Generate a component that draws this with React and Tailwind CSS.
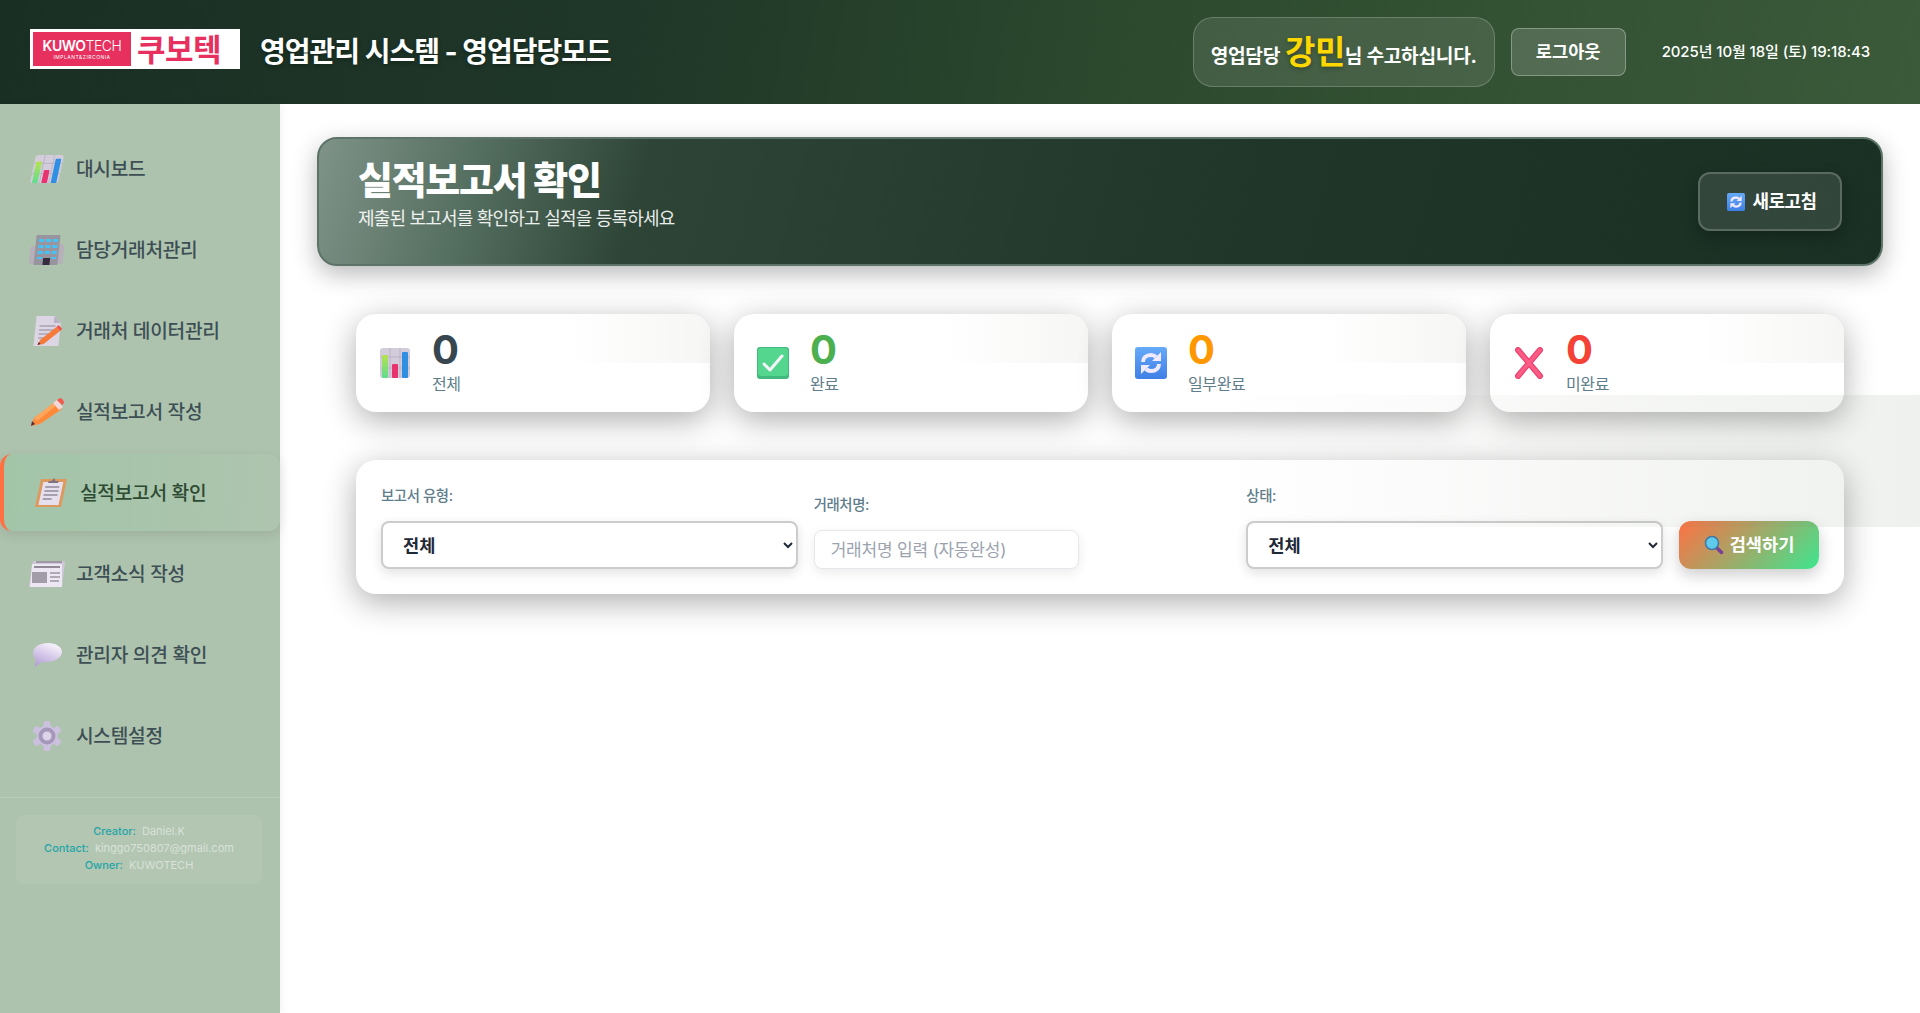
const ChartIcon = ({ className }) => (
  <svg viewBox="0 0 32 32" preserveAspectRatio="none" className={className}>
    <defs>
      <linearGradient id="chartGreen" x1="0" y1="0" x2="0" y2="1">
        <stop offset="0" stopColor="#b5e24f" />
        <stop offset="1" stopColor="#5fdc8f" />
      </linearGradient>
    </defs>
    <rect x="1" y="1" width="30" height="30" rx="3" fill="#d2ccdb" />
    <path d="M1 10h30M1 21h30M11 1v30M21 1v30" stroke="#b5aec1" strokeWidth="0.8" />
    <rect x="3" y="8" width="6" height="23" rx="1" fill="url(#chartGreen)" />
    <rect x="13" y="17" width="6" height="14" rx="1" fill="#e8336f" />
    <rect x="23" y="5" width="6" height="26" rx="1" fill="#2f8fe3" />
  </svg>
)

const BuildingIcon = ({ className }) => (
  <svg viewBox="0 0 34 30" className={className}>
    <path d="M0 12l6-2v19H0zM28 8l6 2v19h-6z" fill="#b5b0ba" />
    <rect x="5" y="0" width="24" height="30" rx="1" fill="#99959f" />
    <path d="M8 4h5v3H8zM15 4h5v3h-5zM22 4h5v3h-5zM8 10h5v3H8zM15 10h5v3h-5zM22 10h5v3h-5zM8 16h5v3H8zM15 16h5v3h-5zM22 16h5v3h-5zM8 22h5v2H8zM22 22h5v2h-5z" fill="#46c3f5" />
    <rect x="14" y="23" width="7" height="7" fill="#362d3f" />
  </svg>
)

const DocPencilIcon = ({ className }) => (
  <svg viewBox="0 0 30 30" className={className}>
    <path d="M3 0h18l7 7v23H3z" fill="#dcd6e4" />
    <path d="M21 0l7 7h-7z" fill="#b9b2c4" />
    <path d="M7 10h16M7 14h16M7 18h10M7 22h7" stroke="#a9a2b2" strokeWidth="1.4" />
    <path d="M7 29l2-5L24 11l4 4-15 13z" fill="#f47b3a" />
    <path d="M24 11l2-2 4 4-2 2z" fill="#f2524a" />
    <path d="M7 29l1-3 2 2z" fill="#5a2a3a" />
  </svg>
)

const PencilIcon = ({ className }) => (
  <svg viewBox="0 0 36 30" className={className}>
    <path d="M2 29l3-8L26 5l7 7-22 15z" fill="#ff8a3a" />
    <path d="M5 21L26 5l2 3L8 24z" fill="#ffa65c" />
    <path d="M24 6l4-3 6 7-4 3z" fill="#f2d8d8" />
    <path d="M28 3l3-2c2 0 4 3 4 5l-2 2z" fill="#f4574c" />
    <path d="M2 29l1-5 3 3z" fill="#5a2a3a" />
  </svg>
)

const ClipboardIcon = ({ className }) => (
  <svg viewBox="0 0 30 30" className={className}>
    <path d="M2 1h26v28H2z" fill="#de9a5e" />
    <rect x="5" y="4" width="20" height="23" fill="#e6e0ee" />
    <path d="M8 9h14M8 13h14M8 17h14M8 21h9" stroke="#918a99" strokeWidth="1.4" />
    <path d="M10 5V3h3l2-3 2 3h3v2z" fill="#7c7480" />
  </svg>
)

const NewsIcon = ({ className }) => (
  <svg viewBox="0 0 36 26" className={className}>
    <path d="M4 0h32l-3 26H0z" fill="#cfc8d8" />
    <path d="M3 3h30v23H1z" fill="#ece7f2" />
    <path d="M7 1h26" stroke="#8f8996" strokeWidth="1.5" />
    <path d="M5 6h26" stroke="#8f8996" strokeWidth="2" />
    <rect x="3" y="11" width="15" height="11" fill="#a29ca8" />
    <path d="M21 12h10M21 16h10M21 20h9" stroke="#9a94a1" strokeWidth="1.4" />
  </svg>
)

const BubbleIcon = ({ className }) => (
  <svg viewBox="0 0 30 24" className={className}>
    <defs>
      <linearGradient id="bubbleFill" x1="0.7" y1="0" x2="0.2" y2="1">
        <stop offset="0" stopColor="#f9f5fc" />
        <stop offset="1" stopColor="#b29dd6" />
      </linearGradient>
    </defs>
    <path d="M16 0c8 0 14 4 14 9s-7 10-15 10c-2 0-4 0-6 .6L3 24l.8-8C1.500 14.500 1 12 1 10 1 4 8 0 16 0z" fill="url(#bubbleFill)" />
  </svg>
)

const GearIcon = ({ className }) => (
  <svg viewBox="0 0 30 30" className={className}>
    <g fill="#cbc0dd">
      <circle cx="15" cy="15" r="10.500" />
      <rect x="11.500" y="0" width="7" height="30" rx="2" />
      <rect x="11.500" y="0" width="7" height="30" rx="2" transform="rotate(60 15 15)" />
      <rect x="11.500" y="0" width="7" height="30" rx="2" transform="rotate(120 15 15)" />
    </g>
    <circle cx="15" cy="15" r="6.500" fill="#dcd4e8" stroke="#a698ba" strokeWidth="4" />
  </svg>
)

const RefreshIcon = ({ className }) => (
  <svg viewBox="0 0 32 32" className={className}>
    <defs>
      <linearGradient id="refreshFill" x1="0" y1="0" x2="0" y2="1">
        <stop offset="0" stopColor="#66aaf8" />
        <stop offset="1" stopColor="#3f7fe6" />
      </linearGradient>
    </defs>
    <rect width="32" height="32" rx="3" fill="url(#refreshFill)" />
    <path d="M8 15c0-4 3-7 8-7 2 0 4 1 5 2" fill="none" stroke="#f1eafc" strokeWidth="4" />
    <path d="M17 14h9V5z" fill="#f1eafc" />
    <path d="M24 17c0 4-3 7-8 7-2 0-4-1-5-2" fill="none" stroke="#f1eafc" strokeWidth="4" />
    <path d="M15 18H6v9z" fill="#f1eafc" />
  </svg>
)

const CheckIcon = ({ className }) => (
  <svg viewBox="0 0 32 32" className={className}>
    <rect width="32" height="32" rx="3" fill="#42b97f" />
    <rect x="1" y="1" width="30" height="28" rx="3" fill="#55d68f" />
    <path d="M7 17l6 6 12-14" fill="none" stroke="#f6f4fb" strokeWidth="3" strokeLinecap="round" strokeLinejoin="round" />
  </svg>
)

const CrossIcon = ({ className }) => (
  <svg viewBox="0 0 32 32" className={className}>
    <path d="M5 3l22 26M27 3L5 29" stroke="#e9436f" strokeWidth="6" strokeLinecap="round" />
    <path d="M5 3l22 26M27 3L5 29" stroke="#fb5c86" strokeWidth="3.5" strokeLinecap="round" />
  </svg>
)

const SearchIcon = ({ className }) => (
  <svg viewBox="0 0 20 20" className={className}>
    <path d="M12.5 12.5l5 5" stroke="#7b3f98" strokeWidth="3.5" strokeLinecap="round" />
    <circle cx="8" cy="8" r="6.5" fill="#5ecbed" stroke="#3f77a8" strokeWidth="1.5" />
  </svg>
)

const navItems = [
  { label: '대시보드', icon: <ChartIcon className="h-[30px] w-[30px] -skew-x-12" /> },
  { label: '담당거래처관리', icon: <BuildingIcon className="h-[30px] w-[34px] -skew-x-6" /> },
  { label: '거래처 데이터관리', icon: <DocPencilIcon className="h-[30px] w-[30px] -skew-x-6" /> },
  { label: '실적보고서 작성', icon: <PencilIcon className="h-[30px] w-[36px]" /> },
  { label: '실적보고서 확인', icon: <ClipboardIcon className="h-[30px] w-[30px] -skew-x-12" />, active: true },
  { label: '고객소식 작성', icon: <NewsIcon className="h-[26px] w-[36px]" /> },
  { label: '관리자 의견 확인', icon: <BubbleIcon className="h-[24px] w-[30px]" /> },
  { label: '시스템설정', icon: <GearIcon className="h-[30px] w-[30px]" /> },
]

const stats = [
  { label: '전체', color: 'text-[#37474f]', icon: <ChartIcon className="h-[32px] w-[32px]" /> },
  { label: '완료', color: 'text-[#4caf50]', icon: <CheckIcon className="h-[32px] w-[32px]" /> },
  { label: '일부완료', color: 'text-[#ff9800]', icon: <RefreshIcon className="h-[32px] w-[32px]" /> },
  { label: '미완료', color: 'text-[#f44336]', icon: <CrossIcon className="h-[32px] w-[34px]" /> },
]

function Header() {
  return (
    <header className="flex h-[104px] items-center bg-[linear-gradient(100deg,#1a2f24_0%,#1f3728_33%,#2d4a2e_60%,#3b5a3a_100%)] pl-[30px] pr-[50px] text-white">
      <div className="mt-[-6px] flex h-[40px] w-[210px] items-center bg-white px-[3px]">
        <div className="flex h-[34px] w-[98px] flex-col items-center justify-center bg-[#e8305f] text-white">
          <span className="text-[14px] leading-[16px] tracking-[-0.5px]">
            <span className="font-semibold">KUWO</span>
            <span className="font-light">TECH</span>
          </span>
          <span className="text-[5px] leading-[7px] tracking-[0.5px]">IMPLANT&ZIRCONIA</span>
        </div>
        <span className="ml-[6px] text-[31px] font-bold leading-none tracking-[-0.5px] text-[#e8305f]">쿠보텍</span>
      </div>
      <h1 className="ml-[20px] text-[28px] font-bold tracking-[-1px] [text-shadow:0_2px_4px_rgba(0,0,0,0.3)]">
        영업관리 시스템 - 영업담당모드
      </h1>
      <div className="ml-auto flex h-[70px] w-[302px] items-center justify-center rounded-[20px] border border-white/20 bg-white/10 text-[19.2px] font-bold tracking-[-0.3px]">
        <span className="mt-[8px]">영업담당</span>
        <span className="ml-[5px] text-[33px] font-bold leading-none tracking-[-0.5px] text-[#ffd700] [text-shadow:0_2px_4px_rgba(0,0,0,0.3)]">강민</span>
        <span className="mt-[8px]">님 수고하십니다.</span>
      </div>
      <button type="button" className="ml-[16px] h-[48px] w-[115px] rounded-lg border border-white/30 bg-white/15 text-[17.6px] font-bold">
        로그아웃
      </button>
      <div className="ml-[36px] text-[15px] font-medium tracking-[-0.1px]">2025년 10월 18일 (토) 19:18:43</div>
    </header>
  )
}

function Sidebar() {
  return (
    <aside className="w-[280px] shrink-0 bg-[#aec3ae] pt-[26px] shadow-[2px_0_8px_rgba(0,0,0,0.05)]">
      <nav className="flex flex-col gap-[4px]">
        {navItems.map((item) => (
          <div
            key={item.label}
            className={
              item.active
                ? 'flex h-[77px] items-center rounded-xl border-l-4 border-[#ff7043] bg-[linear-gradient(90deg,#a2c5a8,#aec4ae)] pl-[29px] text-[#2d4a32] shadow-[0_4px_12px_rgba(0,0,0,0.1)]'
                : 'flex h-[77px] items-center pl-[29px] text-[#3d4f55]'
            }
          >
            <span className="flex w-[36px] items-center justify-center">{item.icon}</span>
            <span className="ml-[11px] mt-[1px] text-[19.2px] font-medium tracking-[-0.3px]">{item.label}</span>
          </div>
        ))}
      </nav>
      <div className="mt-[23px] border-t border-white/15 pt-[17px]">
        <div className="mx-[16px] flex h-[69px] w-[246px] flex-col justify-center rounded-lg bg-white/5 pb-[2px] text-center text-[11px] leading-[17px] text-white/50">
          <div><span className="mr-[6px] font-medium text-[#26a5a8]">Creator:</span>Daniel.K</div>
          <div><span className="mr-[6px] font-medium text-[#26a5a8]">Contact:</span>kinggo750807@gmail.com</div>
          <div><span className="mr-[6px] font-medium text-[#26a5a8]">Owner:</span>KUWOTECH</div>
        </div>
      </div>
    </aside>
  )
}

function FilterLabel({ children }) {
  return <label className="mb-[15px] block text-[14.4px] font-medium leading-[20px] tracking-[-0.4px] text-[#607d8b]">{children}</label>
}

function FilterSelect() {
  return (
    <select className="h-[48px] w-full rounded-lg border-2 border-[#cccccc] bg-white pl-[16px] text-[17.6px] font-semibold text-[#1f2937] shadow-[0_4px_12px_rgba(0,0,0,0.12)]">
      <option>전체</option>
    </select>
  )
}

export default function App() {
  return (
    <div className="flex min-h-screen flex-col overflow-hidden bg-white font-['Inter','Noto_Sans_CJK_KR',sans-serif]">
      <Header />
      <div className="flex flex-1">
        <Sidebar />
        <main className="relative min-w-0 flex-1 px-[37px] pt-[33px]">
          <section className="flex h-[129px] items-center justify-between rounded-[20px] border-2 border-[#5d7368] bg-[linear-gradient(105deg,#7f9388_0%,#556f60_10%,#2d4436_21%,#1f3628_60%,#1a3024_100%)] pl-[39px] pr-[39px] text-white shadow-[0_8px_24px_rgba(0,0,0,0.28)]">
            <div className="mt-[-16px]">
              <h2 className="text-[38px] font-extrabold leading-[48px] tracking-[-1.3px]">실적보고서 확인</h2>
              <p className="mt-[2px] text-[18px] leading-[26px] tracking-[-0.8px] text-white/90">제출된 보고서를 확인하고 실적을 등록하세요</p>
            </div>
            <button type="button" className="flex h-[59px] w-[144px] items-center justify-center gap-[7px] rounded-xl border-2 border-white/20 bg-white/10 pl-[4px] text-[18px] font-bold tracking-[-0.5px] shadow-[0_6px_16px_rgba(0,0,0,0.25)]">
              <RefreshIcon className="h-[18px] w-[18px]" />
              새로고침
            </button>
          </section>

          <section className="mt-[48px] grid grid-cols-4 gap-[24px] px-[39px]">
            {stats.map((stat) => (
              <div key={stat.label} className="relative flex h-[98px] items-center overflow-hidden rounded-[20px] bg-white pl-[23px] shadow-[0_8px_32px_rgba(0,0,0,0.32)]">
                <div className="absolute inset-x-0 top-0 h-[49px] bg-[linear-gradient(90deg,transparent_60%,#f6f6f4_100%)]" />
                <span className="flex w-[32px] justify-center">{stat.icon}</span>
                <div className="relative mb-[3px] ml-[21px]">
                  <div className={`text-[40px] font-bold leading-[44px] ${stat.color}`}>0</div>
                  <div className="text-[16px] leading-[24px] tracking-[-0.4px] text-[#607d8b]">{stat.label}</div>
                </div>
              </div>
            ))}
          </section>

          <section className="mx-[39px] mt-[48px] flex h-[134px] items-end gap-[16px] rounded-[20px] bg-white px-[25px] pb-[25px] shadow-[0_8px_32px_rgba(0,0,0,0.32)]">
            <div className="flex-1">
              <FilterLabel>보고서 유형:</FilterLabel>
              <FilterSelect />
            </div>
            <div className="flex-1">
              <FilterLabel>거래처명:</FilterLabel>
              <input
                placeholder="거래처명 입력 (자동완성)"
                className="h-[39px] w-[265px] rounded-lg border border-[#e5e7eb] bg-white px-[16px] text-[17px] tracking-[-0.2px] shadow-[0_4px_12px_rgba(0,0,0,0.08)] placeholder:text-[#9ca3af]"
              />
            </div>
            <div className="flex-1">
              <FilterLabel>상태:</FilterLabel>
              <FilterSelect />
            </div>
            <button type="button" className="flex h-[48px] w-[140px] items-center justify-center gap-[6px] rounded-xl bg-[linear-gradient(135deg,#ff7043,#3de68f)] text-[17.6px] font-bold text-white shadow-[0_6px_16px_rgba(0,0,0,0.2)]">
              <SearchIcon className="h-[20px] w-[20px]" />
              검색하기
            </button>
          </section>

          <div className="pointer-events-none absolute right-0 top-[291px] h-[132px] w-[700px] bg-[linear-gradient(90deg,transparent,rgba(120,140,110,0.12)_100%)]" />
        </main>
      </div>
    </div>
  )
}
